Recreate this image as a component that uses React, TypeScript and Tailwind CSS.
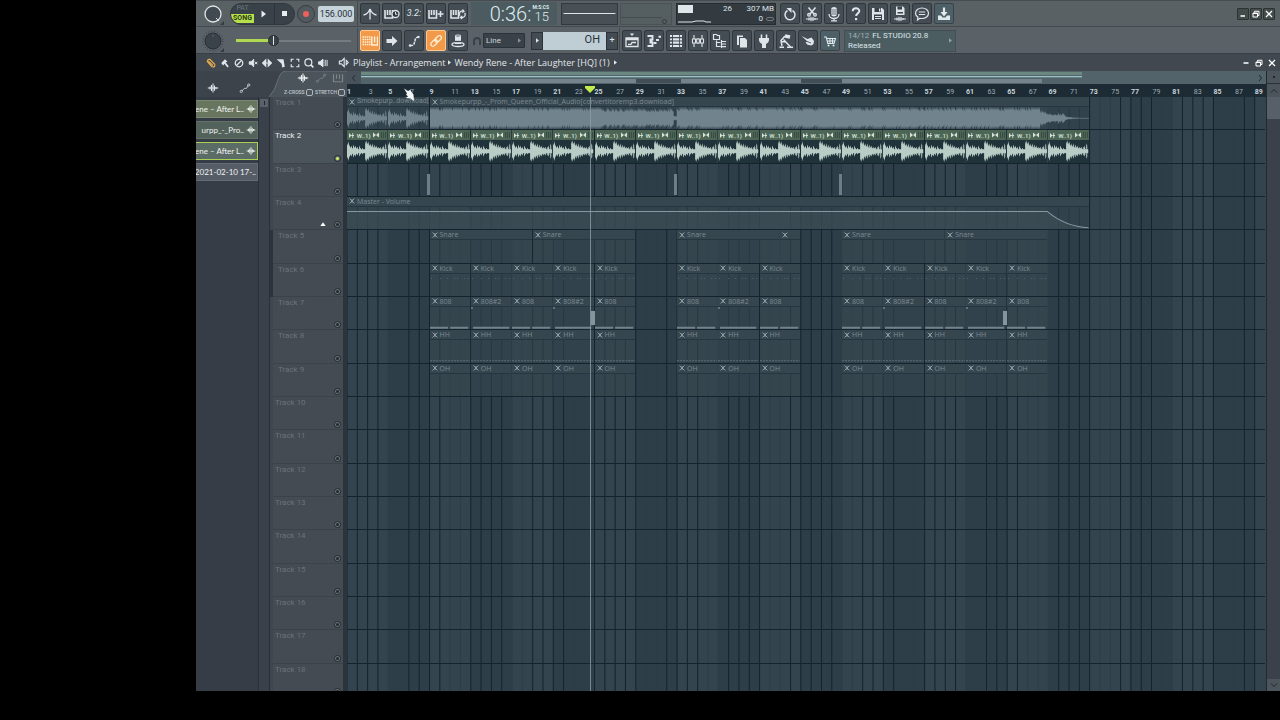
import React from "react";

type IconProps = { className?: string; children: React.ReactNode };

function Icon({ className = "size-4", children }: IconProps) {
  return (
    <svg viewBox="0 0 16 16" className={className} fill="none" stroke="currentColor" strokeWidth="1.3" aria-hidden="true">
      {children}
    </svg>
  );
}

const keys = <path d="M1 4v8h7.500V4M3.500 4v5M6 4v5M1 12h7.500" strokeWidth="1.6" />;

const icons = {
  metronome: (
    <Icon>
      <path d="M1.500 9C4 8.500 6.500 6.500 7.500 4M14.500 9C12 8.500 9.500 6.500 8.500 4M8 3.500v10" />
      <circle cx="8" cy="4" r="1.200" fill="currentColor" stroke="none" />
    </Icon>
  ),
  waitInput: (
    <Icon>
      {keys}
      <circle cx="11.500" cy="8" r="3.500" fill="#2f363d" />
      <path d="M11.500 6v2.300h1.800" strokeWidth="1" />
    </Icon>
  ),
  overdub: (
    <Icon>
      {keys}
      <path d="M12.500 5v6M9.500 8h6" strokeWidth="1.600" />
    </Icon>
  ),
  loopRecord: (
    <Icon>
      {keys}
      <path d="M13.500 5.200a3 3 0 0 0-3.500 4.500M11 11.300a3 3 0 0 0 3.600-4.500M12.500 3.500l1.500 1.800-2 1.200M12 13l-1.600-1.700 2-1.300" strokeWidth="1.200" />
    </Icon>
  ),
  typing: (
    <Icon>
      <path d="M0.500 4h8M0.500 6.500h8M0.500 9h8M0.500 11.500h8" strokeDasharray="1.500 0.700" strokeWidth="1.400" />
      <path d="M9.800 3.500v8.500h5.700V3.500M12.600 3.500v6" strokeWidth="1.400" />
    </Icon>
  ),
  arrow: (
    <Icon>
      <path d="M2.500 6h5.500V3l5.500 5-5.500 5v-3H2.500z" fill="currentColor" stroke="none" />
    </Icon>
  ),
  slide: (
    <Icon>
      <path d="M4 12.500c4 0 4-1 4.500-3.500M9 8.500c0-3 1-4 3-4.500" strokeDasharray="3 1" strokeWidth="1.500" />
      <circle cx="4" cy="12.500" r="1.200" fill="currentColor" stroke="none" />
      <circle cx="12.500" cy="4" r="1.200" fill="currentColor" stroke="none" />
    </Icon>
  ),
  link: (
    <Icon>
      <rect x="-3.500" y="-1.900" width="7.500" height="4.200" rx="2.100" transform="translate(5.800 10) rotate(-45)" />
      <rect x="-3.500" y="-2.100" width="7.500" height="4.200" rx="2.100" transform="translate(10 6) rotate(-45)" />
    </Icon>
  ),
  hat: (
    <Icon>
      <path d="M5 3h6v8H5z" fill="currentColor" stroke="none" />
      <ellipse cx="8" cy="11.500" rx="6" ry="2" />
      <path d="M5 8.500h6" stroke="#3a424a" />
      <ellipse cx="8" cy="3" rx="3" ry="1" fill="#3a424a" strokeWidth="1" />
    </Icon>
  ),
  undo: (
    <Icon>
      <path d="M5.500 4.500a5 5 0 1 0 5 0" strokeWidth="1.500" />
      <path d="M4.500 2h5v5z" fill="currentColor" stroke="none" />
    </Icon>
  ),
  cut: (
    <Icon>
      <path d="M4.500 1.500L10 8M11.500 1.500L6 8" strokeWidth="1.500" />
      <circle cx="5" cy="8.800" r="1.300" />
      <circle cx="11" cy="8.800" r="1.300" />
      <path d="M2 13h12M5 11.500v3M7 10.800v4.400M9 11v4M11 12v2" strokeWidth="1.100" />
    </Icon>
  ),
  mic: (
    <Icon>
      <rect x="5" y="1" width="6" height="9.500" rx="3" fill="currentColor" stroke="none" />
      <path d="M5 4h6M5 6h6M5 8h6" stroke="#3a424a" strokeWidth="0.700" />
      <path d="M3 8c0 6 10 6 10 0M8 12.500v2M5 14.800h6" />
    </Icon>
  ),
  help: (
    <Icon>
      <path d="M4.700 5.200C4.700 1.400 11.300 1.400 11.300 5c0 2.400-3.200 2.400-3.200 5" strokeWidth="2" />
      <path d="M7 12h2.200v2.200H7z" fill="currentColor" stroke="none" />
    </Icon>
  ),
  save: (
    <Icon>
      <path d="M2 2h10l2 2v10H2z" fill="currentColor" stroke="none" />
      <path d="M4.500 2h6.500v4H4.500zM4 8.500h8V14H4z" fill="#3a424a" stroke="none" />
      <path d="M9 2.500h1.300v3H9zM5 10h6v1H5zM5 12h6v1H5z" fill="currentColor" stroke="none" />
    </Icon>
  ),
  saveWave: (
    <Icon>
      <path d="M4 0.500h7l1.500 1.500v7H4z" fill="currentColor" stroke="none" />
      <path d="M5.500 0.500h4.500v3H5.500zM5.500 6h5.500v1.500H5.500z" fill="#3a424a" stroke="none" />
      <path d="M2 13h12M5 11.500v3M7 10.800v4.400M9 11v4M11 12v2" strokeWidth="1.100" />
    </Icon>
  ),
  chat: (
    <Icon>
      <path d="M8 2c3.700 0 6.500 2.200 6.500 5.200S11.700 12.500 8 12.500c-.8 0-1.500-.1-2-.3L3.500 14l.4-2.900C2.400 10.100 1.500 8.800 1.500 7.200 1.500 4.200 4.300 2 8 2zM4.800 6h6.400M4.800 8.500h6.400" strokeWidth="1.200" />
    </Icon>
  ),
  download: (
    <Icon>
      <path d="M8 1.500v6" strokeWidth="2.200" />
      <path d="M4.500 6h7L8 10.500z" fill="currentColor" stroke="none" />
      <path d="M2 9.500h3l1.500 2h3l1.500-2h3v4.500H2z" fill="currentColor" stroke="none" />
    </Icon>
  ),
  playlist: (
    <Icon>
      <path d="M5.800 0.500h4.400L8 3z" fill="currentColor" stroke="none" />
      <path d="M2 5h12v8.500H2zM2 6.500h12" />
      <path d="M4 11.300h3L8 9.500h4" strokeWidth="1.300" />
    </Icon>
  ),
  piano: (
    <Icon>
      <path d="M1.500 3h5v3.500h-3M1.500 13h5V9.500h-3M3.500 8h3" strokeWidth="1.900" />
      <path d="M7.500 10h3M10 7h3M12.500 3.800h2.500" strokeWidth="2" />
    </Icon>
  ),
  rack: (
    <Icon>
      <path d="M2 3h2M2 6.300h2M2 9.600h2M2 13h2" strokeWidth="1.800" />
      <path d="M5 3h9M5 6.300h9M5 9.600h9M5 13h9" strokeWidth="2.200" />
      <path d="M11.500 1.800v12.400" stroke="#3a424a" strokeWidth="0.800" />
    </Icon>
  ),
  mixer: (
    <Icon>
      <path d="M4 2v12M8 5v6M12 2v12" strokeWidth="1.100" />
      <path d="M2.500 6h3v4h-3zM6.700 6h2.600v4H6.700zM10.500 6h3v4h-3z" fill="#3a424a" strokeWidth="1.100" />
    </Icon>
  ),
  browser: (
    <Icon>
      <path d="M1.500 1.500h3l1 1h2v4h-6zM4.500 7.500v6h4M4.500 9.500h4M9.500 8.500h4.500M9.500 11h4.500M9.500 13.700h4.500M9.500 7v8" strokeWidth="1.200" />
    </Icon>
  ),
  copy: (
    <Icon>
      <path d="M3 2.500h6v1.500H5V12H3z" fill="currentColor" stroke="none" />
      <path d="M6 5h5l2 2v7.500H6z" fill="currentColor" stroke="none" />
    </Icon>
  ),
  plug: (
    <Icon>
      <path d="M5.500 1.500v4M10.500 1.500v4" strokeWidth="1.600" />
      <path d="M3 5h10v2c0 2-1.500 3-3 4v4H6v-4C4.500 10 3 9 3 7z" fill="currentColor" stroke="none" />
    </Icon>
  ),
  tempo: (
    <Icon>
      <path d="M7 3l5 1" strokeWidth="3.500" />
      <path d="M7 3L3 7.500 4 13M5.500 6.500l7 7.500M3 8.500l5 .5" strokeWidth="1.500" />
      <path d="M1.500 14.300h4.500M9 14.300h6" strokeWidth="1.600" />
    </Icon>
  ),
  hand: (
    <Icon>
      <path d="M1.500 3l6 3 4-1.500L14 8l-.5 3-2 1.500-4-.8-2-2.200 2-1z" fill="currentColor" stroke="none" />
      <path d="M7 8.500l4 1.500" stroke="#3a424a" strokeWidth="0.800" />
    </Icon>
  ),
  cart: (
    <Icon>
      <path d="M2 4h2.200l1.600 6.500H12l1.500-5H5M5.500 8h7M8 5.500v5M10.500 5.500v5" strokeWidth="1.100" />
      <circle cx="6.500" cy="12.500" r="1" fill="currentColor" stroke="none" />
      <circle cx="11.500" cy="12.500" r="1" fill="currentColor" stroke="none" />
    </Icon>
  ),
};

const waveGlyph = (
  <path d="M1 8h14M4 6v4M6 4v8M8 2v12M10 4.500v7M12 6.500v3" strokeWidth="1.400" />
);
const autoGlyph = (
  <>
    <path d="M4 12L7 8.500h3L12 4.500" strokeWidth="1" />
    <circle cx="3" cy="12.500" r="1.500" strokeWidth="1" />
    <circle cx="13" cy="4" r="1.500" strokeWidth="1" />
  </>
);

function Caret({ className = "" }: { className?: string }) {
  return (
    <svg viewBox="0 0 4 6" className={`h-[5px] w-[3px] shrink-0 ${className}`} aria-hidden="true">
      <path d="M0 0l4 3-4 3z" fill="currentColor" />
    </svg>
  );
}

function ToolButton({ label, lit = false, teal = false, children }: { label: string; lit?: boolean; teal?: boolean; children: React.ReactNode }) {
  const tone = lit
    ? "border-[#ffc88c] bg-[#f29a4a] text-[#fff1d8]"
    : teal
      ? "border-[#394249] bg-[#4d6067] text-[#dfe8ea]"
      : "border-[#2f363c] bg-[#444c54] text-[#dfe5e8]";
  return (
    <button type="button" aria-label={label} className={`flex h-[21px] w-5 shrink-0 items-center justify-center rounded-[2px] border ${tone}`}>
      {children}
    </button>
  );
}

function Divider() {
  return <div className="h-full w-px shrink-0 bg-[#444b51]" />;
}

function Knob({ dark = false }: { dark?: boolean }) {
  return (
    <svg viewBox="0 0 22 22" className="size-[22px] shrink-0" aria-hidden="true">
      {dark ? (
        <>
          <circle cx="11" cy="11" r="10" fill="none" stroke="#32393f" strokeDasharray="1 2" />
          <circle cx="11" cy="11" r="8" fill="#3b434a" stroke="#282f35" />
          <path d="M11 4v3" stroke="#59636b" />
        </>
      ) : (
        <>
          <circle cx="11" cy="11" r="8" fill="#424a51" stroke="#dfe6e8" strokeWidth="1.300" />
          <path d="M14 15l3 3" stroke="#dfe6e8" />
        </>
      )}
      <path d="M18 22h4v-4z" fill="#353c42" />
    </svg>
  );
}

const rowOneRight: [string, React.ReactNode, boolean][] = [
  ["Undo history", icons.undo, false],
  ["Cut audio", icons.cut, false],
  ["Record audio", icons.mic, false],
  ["Help", icons.help, false],
  ["Save", icons.save, false],
  ["Render as audio", icons.saveWave, false],
  ["Messages", icons.chat, false],
  ["Download", icons.download, true],
];

const rowTwoWindows: [string, React.ReactNode, boolean][] = [
  ["View playlist", icons.playlist, false],
  ["View piano roll", icons.piano, false],
  ["View channel rack", icons.rack, false],
  ["View mixer", icons.mixer, false],
  ["View browser", icons.browser, false],
  ["View project picker", icons.copy, false],
  ["View plugin picker", icons.plug, false],
  ["Tempo tapper", icons.tempo, false],
  ["Touch controllers", icons.hand, false],
  ["Shop", icons.cart, true],
];

function WindowControls({ boxed = false }: { boxed?: boolean }) {
  const box = boxed
    ? "flex size-3 items-center justify-center rounded-[1px] border border-[#2c3432] bg-[#434c4b] text-white"
    : "flex size-3 items-center justify-center text-white";
  return (
    <div className={boxed ? "ml-auto flex items-center gap-px pr-[5px]" : "ml-auto flex items-center gap-px pr-[2px]"}>
      <button type="button" aria-label="Minimize" className={box}>
        <Icon className="size-2"><path d={boxed ? "M3 12h9" : "M3 8h10"} strokeWidth="3" /></Icon>
      </button>
      <button type="button" aria-label="Restore" className={box}>
        <Icon className="size-2"><path d="M2 6h9v8H2zM2 7h9M5 5V2.500h9V11h-3" strokeWidth="2" /></Icon>
      </button>
      <button type="button" aria-label="Close" className={box}>
        <Icon className="size-2"><path d="M2 2l12 12M14 2L2 14" strokeWidth="2.500" /></Icon>
      </button>
    </div>
  );
}

function TransportRow() {
  return (
    <div className="flex h-[27px] shrink-0 items-center border-b border-t border-b-[#444a4f] border-t-[#464c51] bg-[#596164]">
      <div className="pl-[6px]"><Knob /></div>
      <div className="ml-[6px] flex h-[22px] w-[65px] shrink-0 items-stretch overflow-hidden rounded-full border border-[#30373d] bg-[#3a4249]">
        <div className="flex w-[23px] flex-col text-center text-[7px] leading-[9px]">
          <button type="button" className="h-[10px] text-[#6c767d]">PAT</button>
          <button type="button" className="h-[9px] bg-[#b5e04c] font-bold text-[#2c3a17]">SONG</button>
        </div>
        <button type="button" aria-label="Play" className="flex flex-1 items-center justify-center border-r border-[#2c3339] text-[#e8edef]">
          <Icon className="size-2"><path d="M3 1l9 7-9 7z" fill="currentColor" stroke="none" /></Icon>
        </button>
        <button type="button" aria-label="Stop" className="flex flex-1 items-center justify-center">
          <span className="size-[5px] bg-[#e8edef]" />
        </button>
      </div>
      <button type="button" aria-label="Record" className="ml-[2px] flex size-[18px] shrink-0 items-center justify-center rounded-full border border-[#363d43] bg-[#525a60]">
        <span className="size-[6px] rounded-full bg-[#f0605a]" />
      </button>
      <input
        aria-label="Tempo"
        defaultValue="156.000"
        className="ml-[3px] h-4 w-9 shrink-0 rounded-[2px] bg-[#c6d3da] text-center text-[9px] text-[#27323a] outline-none"
      />
      <div className="ml-[3px] flex h-full items-center gap-[2px]">
        <Divider />
        <ToolButton label="Metronome">{icons.metronome}</ToolButton>
        <ToolButton label="Wait for input">{icons.waitInput}</ToolButton>
        <ToolButton label="Countdown">
          <span className="text-[9px] italic leading-none">3.2:</span>
        </ToolButton>
        <ToolButton label="Overdub">{icons.overdub}</ToolButton>
        <ToolButton label="Loop record">{icons.loopRecord}</ToolButton>
      </div>
      <div className="ml-[3px] flex h-[23px] w-[86px] shrink-0 items-center justify-end gap-px bg-[#4b5b60] pr-2 text-[#dcebef]">
        <span className="text-[20px] font-light leading-none">0:36:</span>
        <span className="flex flex-col items-end">
          <span className="text-[5px] font-bold leading-[5px]">M:S:CS</span>
          <span className="text-[13px] font-light leading-[13px]">15</span>
        </span>
      </div>
      <div className="ml-1 flex h-[22px] shrink-0 gap-[2px]">
        <svg viewBox="0 0 57 22" className="h-full w-[57px] border border-[#32393e] bg-[#485055]" aria-hidden="true">
          <path d="M0 10.500h57" stroke="#dfe6e8" strokeWidth="1.200" />
        </svg>
        <div className="flex w-[52px] items-start border border-[#4a5256] bg-[#555e61]">
          <span className="h-[14px] w-full border-b border-[#454d52]" />
          <span className="mr-1 size-[5px] shrink-0 self-end rounded-full border border-[#343b40]" />
        </div>
      </div>
      <div className="ml-1 flex h-[22px] w-[100px] shrink-0 border border-[#262d32] bg-[#333b41] text-[8px] leading-[10px] text-[#dce4e8]">
        <svg viewBox="0 0 34 20" className="w-[34px] shrink-0" aria-hidden="true">
          <rect x="1" y="1" width="15" height="8" fill="#dfe6ea" />
          <path d="M1 18h14l4-1h8l2 1h5" fill="none" stroke="#dfe6ea" />
        </svg>
        <span className="w-[21px] text-right">26</span>
        <span className="flex flex-1 flex-col items-end pr-px">
          <span>307 MB</span>
          <span className="flex items-center gap-[3px]">
            0 <span className="h-1 w-2 rounded-full border border-[#6f7a80]" />
          </span>
        </span>
      </div>
      <div className="ml-1 flex gap-[2px]">
        {rowOneRight.map(([label, icon, teal]) => (
          <ToolButton key={label} label={label} teal={teal}>{icon}</ToolButton>
        ))}
      </div>
      <WindowControls boxed />
    </div>
  );
}

function PatternRow() {
  return (
    <div className="flex h-[27px] shrink-0 items-center border-b border-[#383e44] bg-[#5a6167] pt-px">
      <div className="pl-[6px]"><Knob dark /></div>
      <input
        type="range"
        aria-label="Song position"
        min={0}
        max={100}
        defaultValue={31}
        className="ml-3 h-3 w-[115px] shrink-0 appearance-none bg-[linear-gradient(#b0d850,#b0d850),linear-gradient(#757d83,#757d83)] bg-[length:32%_3px,100%_2px] bg-[position:left_center,left_center] bg-no-repeat [&::-webkit-slider-thumb]:size-[11px] [&::-webkit-slider-thumb]:appearance-none [&::-webkit-slider-thumb]:rounded-full [&::-webkit-slider-thumb]:border [&::-webkit-slider-thumb]:border-[#22282d] [&::-webkit-slider-thumb]:bg-[linear-gradient(90deg,#3a4248_4px,#dfe6e8_4px,#dfe6e8_5px,#3a4248_5px)]"
      />
      <div className="ml-[6px] flex h-full items-center gap-[2px]">
        <Divider />
        <ToolButton label="Typing keyboard to piano" lit>{icons.typing}</ToolButton>
        <ToolButton label="Step mode">{icons.arrow}</ToolButton>
        <ToolButton label="Slide">{icons.slide}</ToolButton>
        <ToolButton label="Link" lit>{icons.link}</ToolButton>
        <ToolButton label="Multilink">{icons.hat}</ToolButton>
      </div>
      <svg viewBox="0 0 10 10" className="ml-1 size-[10px] shrink-0" aria-hidden="true">
        <path d="M2 9V5a3 3 0 0 1 6 0v4" fill="none" stroke="#3a4248" strokeWidth="2" />
      </svg>
      <div className="ml-px flex h-[15px] w-[42px] shrink-0 items-center rounded-[1px] border border-[#2b3238] bg-[#3a4249] pr-[3px] text-[#89939a]">
        <select aria-label="Snap" className="h-full min-w-0 flex-1 appearance-none pl-[2px] text-[8px] leading-none text-[#cfd7db] outline-none">
          <option>Line</option>
        </select>
        <Caret />
      </div>
      <div className="ml-[6px] flex h-[18px] shrink-0 items-stretch text-[#dfe6e8]">
        <button type="button" aria-label="Pattern menu" className="flex w-3 items-center justify-center border border-[#2b3238] bg-[#434b53]"><Caret /></button>
        <input aria-label="Pattern" defaultValue="OH" className="w-[63px] bg-[#bfcdd5] pr-[6px] text-right text-[11px] text-[#27323a] outline-none" />
        <button type="button" aria-label="Add pattern" className="w-3 border border-[#2b3238] bg-[#434b53] text-[9px] leading-none">+</button>
      </div>
      <div className="ml-px flex h-full items-center gap-[2px]">
        <Divider />
        {rowTwoWindows.map(([label, icon, teal]) => (
          <ToolButton key={label} label={label} teal={teal}>{icon}</ToolButton>
        ))}
      </div>
      <a href="#news" className="ml-1 flex h-[22px] w-[112px] shrink-0 items-center justify-between border border-[#414f53] bg-[#4c5d61] px-[3px] text-[8px] leading-[10px] text-[#dbe7ea]">
        <span>
          <span className="mr-px text-[#9fb0b5]">14/12</span> FL STUDIO 20.8
          <br />
          Released
        </span>
        <Caret className="text-[#93a2a7]" />
      </a>
    </div>
  );
}

const playlistTools: [string, React.ReactNode][] = [
  ["Draw", <path key="p" d="M3 3l3-1 8 8v3l-2 1.500-3-1-7-8zM4 5l7 7" stroke="#e9b04e" strokeWidth="1.800" />],
  ["Paint", <path key="p" d="M2 8l6-6 4 4-3 1 5 6-2 2-5-6-2 3z" fill="currentColor" stroke="none" />],
  ["Delete", <g key="p"><circle cx="8" cy="8" r="6" strokeWidth="2" /><path d="M4 12L12 4" strokeWidth="2" /></g>],
  ["Mute", <path key="p" d="M2 6h3l4-4v12l-4-4H2zM11 6l4 4M15 6l-4 4" fill="currentColor" strokeWidth="1.600" />],
  ["Slip", <path key="p" d="M1 8l5-5v10zM15 8l-5-5v10zM6 8h4" fill="currentColor" strokeWidth="1.800" />],
  ["Slice", <path key="p" d="M1 2l11 0 2 12-4 1-1-6z" fill="currentColor" stroke="none" />],
  ["Select", <path key="p" d="M2 6V2h4M10 2h4v4M14 10v4h-4M6 14H2v-4" strokeWidth="1.900" />],
  ["Zoom", <g key="p"><circle cx="7" cy="7" r="5.500" strokeWidth="2" /><path d="M11 11l4 4" strokeWidth="2.500" /></g>],
  ["Playback", <path key="p" d="M1 6h2l5-4v12l-5-4H1zM11.500 3v10M14.500 3v10" fill="currentColor" strokeWidth="1.600" />],
];

function PlaylistTitle() {
  return (
    <div className="flex h-[17px] shrink-0 items-center bg-[#414850] text-[#e1e7ea]">
      <div className="flex items-center gap-1 pl-[10px]">
        {playlistTools.map(([label, glyph]) => (
          <button key={label} type="button" aria-label={label} className="flex size-[10px] items-center justify-center">
            <Icon className="size-[10px]">{glyph}</Icon>
          </button>
        ))}
      </div>
      <Icon className="ml-[10px] size-[11px]"><path d="M2 6h3l4-4v12l-4-4H2zM12 5l3 3-3 3z" strokeWidth="1.600" /></Icon>
      <h1 className="ml-1 flex items-center whitespace-nowrap font-['Open_Sans',sans-serif] text-[9px] font-medium leading-[15px]">
        Playlist - Arrangement
        <Caret className="mx-[3px]" />
        Wendy Rene - After Laughter [HQ] (1)
        <Caret className="ml-1" />
      </h1>
      <WindowControls />
    </div>
  );
}

function PlaylistTabs() {
  return (
    <div className="relative flex h-[26px] w-[151px] shrink-0 bg-[#3c434b]">
      <svg viewBox="0 0 78 26" className="absolute right-0 top-0 h-[26px] w-[78px]" aria-hidden="true">
        <path d="M0 26L5 19 11 4Q13 0 17 0h61v26z" fill="#4b535b" />
        <path d="M0 26L5 19 11 4Q13 0 17 0h61" fill="none" stroke="#66707a" />
      </svg>
      <div className="flex flex-1 items-end gap-5 pb-[3px] pl-[11px] text-[#dfe6e8]">
        <Icon className="size-3">{waveGlyph}</Icon>
        <Icon className="size-3">{autoGlyph}</Icon>
      </div>
      <div className="relative flex w-[63px] flex-col justify-between text-[#7b858c]">
        <div className="flex justify-between pl-[13px] pr-[3px] pt-px">
          <Icon className="size-3 text-[#eef2f3]">{waveGlyph}</Icon>
          <Icon className="size-3">{autoGlyph}</Icon>
          <Icon className="size-3"><path d="M2 3v10h12V3M6 3v6M10 3v6" strokeWidth="1.600" /></Icon>
        </div>
        <div className="flex items-center justify-between whitespace-nowrap pb-px pr-[2px] text-[5px] font-medium leading-[8px] text-[#c0c9ce]">
          <label className="flex items-center gap-px">
            Z-CROSS
            <input type="checkbox" className="size-[7px] appearance-none rounded-[2px] border border-[#aeb8bd]" />
          </label>
          <label className="flex items-center gap-px">
            STRETCH
            <input type="checkbox" className="size-[7px] appearance-none rounded-[2px] border border-[#aeb8bd]" />
          </label>
        </div>
      </div>
    </div>
  );
}

const overviewBlocks = [[79, 275], [320, 440], [481, 681]];
const overviewGaps = [[275, 320], [440, 481]];

function Overview() {
  return (
    <div className="flex h-[13px] items-stretch text-[#1f292f]">
      <button type="button" aria-label="Scroll left" className="flex w-[14px] items-center justify-center bg-[#48525a]">
        <Icon className="size-2"><path d="M10 2L5 8l5 6" strokeWidth="2" /></Icon>
      </button>
      <svg viewBox="0 0 893 13" preserveAspectRatio="none" className="h-full w-full min-w-0 flex-1" aria-hidden="true">
        <rect width="893" height="13" fill="#52636a" />
        <rect y="1" width="721" height="3" fill="#6a8780" />
        <rect y="5" width="721" height="1" fill="#9bc2c6" />
        <rect y="6" width="721" height="1" fill="#628086" />
        {overviewBlocks.map(([a, b]) => <rect key={a} x={a} y="8" width={b - a} height="4" fill="#74838c" />)}
        {overviewGaps.map(([a, b]) => <rect key={a} x={a} y="8" width={b - a} height="4" fill="#414e56" />)}
      </svg>
      <button type="button" aria-label="Scroll right" className="flex w-3 items-center justify-center bg-[#53636a]">
        <Icon className="size-2"><path d="M6 2l5 6-5 6" strokeWidth="2" /></Icon>
      </button>
    </div>
  );
}

const BARS = 89;
const PLAYHEAD = 23.56;
const rulerLabels = Array.from({ length: 45 }, (_, i) => i * 2 + 1);

function Ruler() {
  return (
    <div className="relative h-[13px] bg-[#1d2b35] pr-px">
      <div className="grid h-full grid-cols-[repeat(89,minmax(0,1fr))] items-end leading-[9px]">
        {rulerLabels.map((n) => (
          <span
            key={n}
            className={n % 4 === 1 ? "text-[7px] font-bold text-[#c9d4da]" : "pl-px text-[7px] text-[#9fadb5]"}
            style={{ gridColumn: `${n} / span ${n === BARS ? 1 : 2}` }}
          >
            {n}
          </span>
        ))}
      </div>
      <svg viewBox="0 0 10 7" className="absolute top-[2px] h-[7px] w-[10px] -translate-x-1/2" style={{ left: `${(PLAYHEAD / BARS) * 100}%` }} aria-hidden="true">
        <path d="M0 0h10v2L5 7 0 2z" fill="#c3ec4d" />
      </svg>
    </div>
  );
}

const softLines = new Set([4, 5, 10, 11, 16, 17, 22, 23, 29, 30, 35, 36, 41, 42, 48, 49, 54, 55, 60, 61, 66, 67, 68, 73, 74, 79, 80, 85, 86]);
const barIndexes = Array.from({ length: BARS }, (_, i) => i);

function GridBackground() {
  return (
    <svg viewBox="0 0 89 18" preserveAspectRatio="none" className="absolute inset-0 h-full w-full" aria-hidden="true">
      <rect width="89" height="18" fill="#33444e" />
      {barIndexes.filter((b) => b % 8 === 4).map((b) => <rect key={b} x={b} width="4" height="18" fill="#2e3e49" />)}
      {barIndexes.map((b) => (
        <path key={b} d={`M${b} 0V18`} stroke={softLines.has(b) ? "#2d3d48" : "#14232d"} strokeWidth="1" vectorEffect="non-scaling-stroke" />
      ))}
    </svg>
  );
}

const loopShape = [7, 9, 6, 4, 5, 3, 6, 4, 5, 3, 4, 2, 5, 3, 2, 3, 2, 2, 9, 10, 8, 9, 6, 7, 5, 7, 4, 6, 4, 5, 3, 4, 3, 4, 2, 4, 5, 2, 7, 2];

function mirrored(values: number[]) {
  const top = values.map((v, i) => `L${i} ${10 - v}L${i + 1} ${10 - v * 0.7}`).join("");
  const bottom = values.map((v, i) => `L${i + 1} ${10 + v * 0.7}L${i} ${10 + v}`).reverse().join("");
  return `M0 10${top}${bottom}Z`;
}

const loopPath = mirrored(loopShape);
const songShape = Array.from({ length: 660 }, (_, i) => {
  const noise = ((i * 7919 + ((i * i) % 97) * 31) % 100) / 100;
  if (i > 610) {
    const t = (i - 610) / 50;
    const bump = i > 628 && i < 636 ? 3 : 0;
    return Math.max(0.3, (1 - t) * (1 - t) * 9 * (0.6 + noise * 0.4) + bump * noise);
  }
  if (i > 243 && i < 247) return 2;
  if (i > 170 && i < 244) return 10 - noise * 3;
  return 10.5 - (noise > 0.8 ? 2 : noise * 0.6);
});
const songPath = mirrored(songShape);

function Wave({ path, width, tone }: { path: string; width: number; tone: string }) {
  return (
    <svg viewBox={`0 0 ${width} 20`} preserveAspectRatio="none" className={`min-h-0 w-full flex-1 ${tone}`} aria-hidden="true">
      <path d={path} fill="currentColor" />
    </svg>
  );
}

function ClipMark() {
  return (
    <svg viewBox="0 0 6 6" className="size-[6px] shrink-0" aria-hidden="true">
      <path d="M0.500 0.500L5.500 5.500M5.500 0.500L0.500 5.500M3 1v4" stroke="#93a1a8" strokeWidth="0.900" />
    </svg>
  );
}

type ClipProps = { start: number; length: number; name?: string; dense?: boolean; children?: React.ReactNode };

function Clip({ start, length, name, dense = false, children }: ClipProps) {
  return (
    <div
      className="mr-px flex min-w-0 flex-col overflow-hidden bg-[#35464f]/60"
      style={{ gridColumn: `${start + 1} / span ${length}`, gridRow: 1 }}
    >
      <div className={`flex h-[10px] shrink-0 items-center gap-[2px] overflow-hidden whitespace-nowrap border-b border-[#263640] bg-[#36464f] pl-[2px] text-[7px] leading-[9px] text-[#7c8a92] ${dense ? "font-[Roboto,sans-serif]" : "font-['Open_Sans',sans-serif]"}`}>
        <ClipMark />
        {name}
      </div>
      {children}
    </div>
  );
}

function LoopClip({ start }: { start: number }) {
  return (
    <div
      className="mr-px flex min-w-0 flex-col overflow-hidden bg-[#20323a]"
      style={{ gridColumn: `${start + 1} / span 4`, gridRow: 1 }}
    >
      <div className="flex h-[10px] shrink-0 items-center justify-between overflow-hidden whitespace-nowrap bg-[#4c6555] pl-[2px] text-[6px] font-medium leading-[9px] text-[#d5e2d8]">
        <svg viewBox="0 0 6 6" className="size-[5px] shrink-0" fill="currentColor" aria-hidden="true"><path d="M0 0l3 3-3 3zM3 2.300h3v1.400H3zM4 0h1v6H4z" /></svg>
        <span>W..1)</span>
        <svg viewBox="0 0 14 6" className="h-[6px] w-[14px] shrink-0" fill="currentColor" aria-hidden="true">
          <path d="M0 0.500l3 2.500-3 2.500zM6 0.500L3 3l3 2.500z" />
          <path d="M8 0h.7v6H8zM10 0h.7v6H10zM12 0h.7v6H12z" fill="#30473a" />
        </svg>
      </div>
      <Wave path={loopPath} width={40} tone="text-[#b9ccc5]" />
    </div>
  );
}

function Blip({ bar, short = false }: { bar: number; short?: boolean }) {
  return (
    <span
      className={short ? "mb-1 h-[14px] w-1 self-end justify-self-end bg-[#84959e]" : "mb-px h-[21px] w-[3px] self-end justify-self-end bg-[#6d7e87]"}
      style={{ gridColumn: bar, gridRow: 1 }}
    />
  );
}

const loopStarts = Array.from({ length: 18 }, (_, i) => i * 4);
const sections = [
  [8, 12, 16, 20, 24],
  [32, 36, 40],
  [48, 52, 56, 60, 64],
];

function Notes({ kind }: { kind: string }) {
  const color = "#72838c";
  return (
    <svg viewBox="0 0 40 22" preserveAspectRatio="none" className="min-h-0 w-full flex-1" aria-hidden="true">
      {kind === "808" && <path d="M0 20.500h18M20 20.500h18" stroke={color} strokeWidth="2" />}
      {kind === "808#2" && <path d="M2 20.500h36" stroke={color} strokeWidth="2" />}
      {kind === "808#2" && <path d="M0 1h2" stroke={color} strokeWidth="1.500" />}
      {kind === "HH" && <path d="M0 20.500h40" stroke="#5d6e77" strokeDasharray="2 1" />}
      {kind === "Kick" && <path d="M1 4.500h1M10 4.500h1M17 4.500h1M24 4.500h1M27 4.500h1M34 4.500h1M38 4.500h1" stroke="#53646d" />}
    </svg>
  );
}

function PatternClips({ name }: { name: string }) {
  return (
    <>
      {sections.flatMap((group) =>
        group.map((start, i) => {
          const label = name === "808" && i % 2 === 1 ? "808#2" : name;
          return (
            <Clip key={start} start={start} length={4} name={label}>
              <Notes kind={label} />
            </Clip>
          );
        }),
      )}
    </>
  );
}

const snares: [number, number, string][] = [
  [8, 10, "Snare"],
  [18, 10, "Snare"],
  [32, 10, "Snare"],
  [42, 2, ""],
  [48, 10, "Snare"],
  [58, 10, "Snare"],
];

function laneContent(track: number): React.ReactNode {
  switch (track) {
    case 1:
      return (
        <>
          <Clip start={0} length={8} name="Smokepurp..download]" dense>
            <div className="flex min-h-0 flex-1 gap-px">
              <Wave path={loopPath} width={40} tone="text-[#71838c]" />
              <Wave path={loopPath} width={40} tone="text-[#71838c]" />
            </div>
          </Clip>
          <Clip start={8} length={64} name="Smokepurpp_-_Prom_Queen_Official_Audio[convertitoremp3.download]">
            <Wave path={songPath} width={660} tone="text-[#71838c]" />
          </Clip>
        </>
      );
    case 2:
      return loopStarts.map((s) => <LoopClip key={s} start={s} />);
    case 3:
      return [8, 32, 48].map((b) => <Blip key={b} bar={b} />);
    case 4:
      return (
        <Clip start={0} length={72} name="Master - Volume">
          <svg viewBox="0 0 720 22" preserveAspectRatio="none" className="min-h-0 w-full flex-1" aria-hidden="true">
            <path d="M0 4.500H680Q697 19 720 20.500V22H0z" fill="#3d4f58" fillOpacity="0.500" />
            <path d="M0 4.500H680Q697 19 720 20.500" fill="none" stroke="#8797a0" />
          </svg>
        </Clip>
      );
    case 5:
      return snares.map(([s, l, n]) => <Clip key={s} start={s} length={l} name={n} />);
    case 6:
      return <PatternClips name="Kick" />;
    case 7:
      return (
        <>
          <PatternClips name="808" />
          <Blip bar={24} short />
          <Blip bar={64} short />
        </>
      );
    case 8:
      return <PatternClips name="HH" />;
    case 9:
      return <PatternClips name="OH" />;
    default:
      return null;
  }
}

const tracks = Array.from({ length: 18 }, (_, i) => i + 1);

function TrackHeader({ n }: { n: number }) {
  const active = n === 2;
  const grouped = n >= 5 && n <= 9;
  return (
    <div className={`flex min-h-0 justify-between border-b border-[#3b424a] pr-[2px] ${active ? "bg-[#4b535b]" : "bg-[#444b53]"} ${grouped ? "pl-[5px]" : "pl-[2px]"}`}>
      <span className={`pt-px text-[8px] leading-[10px] ${active ? "text-[#e9eef0]" : "text-[#6a737b]"}`}>Track {n}</span>
      <span className="flex items-end gap-2 pb-px">
        {n === 4 && <Icon className="mb-px size-[6px] text-white"><path d="M8 3l7 10H1z" fill="currentColor" stroke="none" /></Icon>}
        <button type="button" aria-label={`Mute track ${n}`} className="flex size-[7px] items-center justify-center rounded-full border border-[#20272d] bg-[#6c757c]">
          <span className={`size-[3px] rounded-full ${active ? "bg-[#c9f04f]" : "bg-[#20272d]"}`} />
        </button>
      </span>
    </div>
  );
}

const pickerItems = [
  { text: "ene – After L..", box: "border-[#7a8874] bg-[#68765f]", wave: true },
  { text: "urpp_-_Pro..", box: "border-[#637067] bg-[#53625a]", wave: true },
  { text: "ene – After L..", box: "border-[#a9cf55] bg-[#5b6b65]", wave: true },
  { text: "_2021-02-10 17-..", box: "border-[#636a74] bg-[#565d67]", wave: false },
];

function Picker() {
  return (
    <div className="flex w-[62px] shrink-0 flex-col gap-[3px] bg-[#363d46] pt-[3px]">
      {pickerItems.map((item, i) => (
        <button key={i} type="button" className={`flex h-[18px] items-center justify-end gap-[2px] whitespace-nowrap border border-l-0 pr-px font-[Lato,sans-serif] text-[8px] text-[#eef2f0] ${item.box}`}>
          <span className="shrink-0">{item.text}</span>
          {item.wave && <Icon className="size-[10px] shrink-0">{waveGlyph}</Icon>}
        </button>
      ))}
    </div>
  );
}

function PlaylistBody() {
  return (
    <div className="flex min-h-0 flex-1 overflow-hidden">
      <Picker />
      <div className="w-3 shrink-0 border-x border-[#2a3037] bg-[#3a414a] px-px pt-[2px]">
        <div className="flex h-2 items-center justify-center bg-[#59616a]"><span className="h-1 w-px bg-[#20272d]" /></div>
      </div>
      <div className="flex w-[77px] shrink-0 border-r-4 border-[#2b333b]">
        <div className="w-[3px] shrink-0 bg-[#3f464e] pt-[133px]"><div className="h-[67px] bg-[#2c333a]" /></div>
        <div className="h-[600px] flex-1">
          <div className="grid h-full grid-rows-[repeat(18,minmax(0,1fr))]">
            {tracks.map((n) => <TrackHeader key={n} n={n} />)}
          </div>
        </div>
      </div>
      <div className="min-w-0 flex-1 bg-[#33444e] pr-px">
        <div className="relative grid h-[600px] grid-rows-[repeat(18,minmax(0,1fr))]">
          <GridBackground />
          {tracks.map((n) => (
            <div key={n} className="relative grid min-h-0 grid-cols-[repeat(89,minmax(0,1fr))] grid-rows-[minmax(0,1fr)] border-b border-[#14232d]">
              {laneContent(n)}
            </div>
          ))}
          <div className="absolute inset-y-0 w-px bg-[#8c9ca5]/80" style={{ left: `${(PLAYHEAD / BARS) * 100}%` }} />
        </div>
      </div>
      <div className="flex w-[14px] shrink-0 flex-col justify-between border-l border-[#23292f] bg-[#3a414a]">
        <div className="h-[22px] bg-[#575f68]" />
        <button type="button" aria-label="Scroll down" className="flex h-3 items-center justify-center bg-[#4c545c] text-[#20272d]">
          <Icon className="size-2"><path d="M2 5l6 6 6-6" strokeWidth="2" /></Icon>
        </button>
      </div>
    </div>
  );
}

export default function App() {
  return (
    <div className="flex h-screen flex-col bg-black pb-[29px] pl-[196px] font-[Roboto,sans-serif]">
      <main className="relative flex min-h-0 flex-1 flex-col overflow-hidden bg-[#3c434b]">
        <TransportRow />
        <PatternRow />
        <PlaylistTitle />
        <div className="flex h-[26px] shrink-0">
          <PlaylistTabs />
          <div className="min-w-0 flex-1">
            <Overview />
            <Ruler />
          </div>
          <div className="flex w-[14px] shrink-0 flex-col border-l border-[#23292f] bg-[#4c545c] text-[#20272d]">
            <button type="button" aria-label="Playlist zoom" className="flex h-[13px] items-center justify-center border-b border-[#2b3238]"><span className="size-[2px] bg-[#20272d]" /></button>
            <button type="button" aria-label="Scroll up" className="flex h-[13px] items-center justify-center">
              <Icon className="size-2"><path d="M2 11l6-6 6 6" strokeWidth="2" /></Icon>
            </button>
          </div>
        </div>
        <PlaylistBody />
        <svg viewBox="0 0 11 14" className="pointer-events-none absolute left-[208px] top-[87px] h-[14px] w-[11px]" aria-hidden="true">
          <path d="M0 1.500l4 2.500 2-1 0-1 1.500 3 2 2.500L10 14l-3.500-2.500-5-.5 2.500-1.500-2-2 1-1z" fill="#f4f6f7" />
        </svg>
      </main>
    </div>
  );
}
